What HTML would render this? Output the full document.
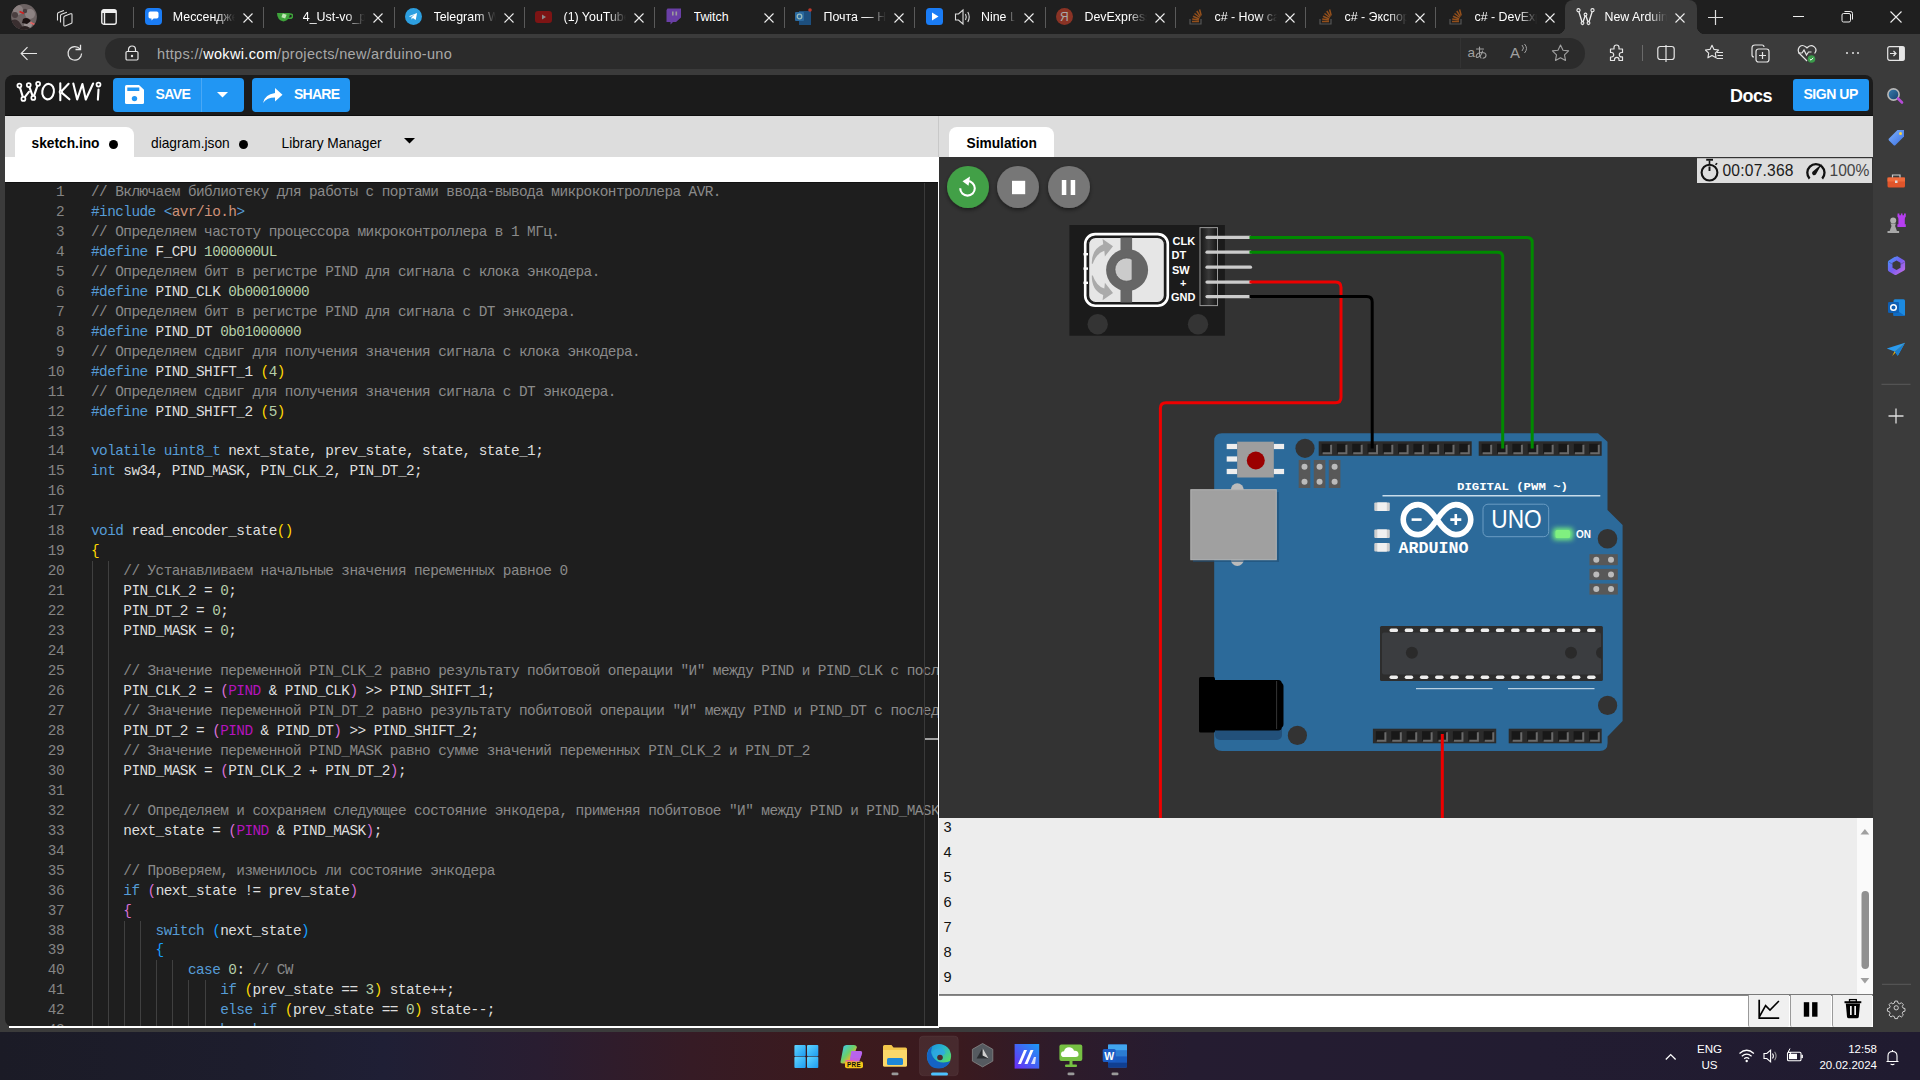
<!DOCTYPE html>
<html><head><meta charset="utf-8">
<style>
*{margin:0;padding:0;box-sizing:border-box}
html,body{width:1920px;height:1080px;overflow:hidden;background:#3b3b3b;font-family:"Liberation Sans",sans-serif}
body{position:relative}
.a{position:absolute}
#titlebar{left:0;top:0;width:1920px;height:34px;background:#1f1f1f}
#toolbar{left:0;top:34px;width:1920px;height:41px;background:#3b3b3b}
#page{left:5px;top:75px;width:1868px;height:957px;background:#333;border-top-left-radius:8px;overflow:hidden}
#hdr{left:5px;top:75px;width:1868px;height:41px;background:#1b1b1b;border-radius:8px 8px 0 0}
#etabs{left:5px;top:116px;width:933px;height:41px;background:#dddddd}
#wband{left:5px;top:157px;width:933px;height:25px;background:#fff}
#code{left:5px;top:182px;width:933px;height:845px;background:#1e1e1e;overflow:hidden;border-bottom-left-radius:8px}
#codeclip{left:0;top:0;width:938px;height:1027px;overflow:hidden}
.ln{position:absolute;left:0;height:20px;width:938px;font-family:"Liberation Mono",monospace;font-size:14.4px;letter-spacing:-0.56px;line-height:20px;white-space:pre;color:#dedede}
.ln .num{position:absolute;right:874px;color:#858585;text-align:right}
.ln .src{position:absolute;left:91px}
.ln i{font-style:normal}
i.c{color:#8a8a8a}
i.k{color:#569cd6}
i.s{color:#ce9178}
i.n{color:#b5cea8}
i.y{color:#ffd700}
i.p{color:#da70d6}
i.b{color:#179fff}
i.m{color:#b414bc}
#simtabs{left:939px;top:116px;width:934px;height:41px;background:#dddddd}
#simcanvas{left:939px;top:157px;width:934px;height:661px;background:#333}
#serial{left:939px;top:818px;width:934px;height:177px;background:#ededed}
#serin{left:939px;top:995px;width:934px;height:32px;background:#fff;border-top:1px solid #888}
#sidebar{left:1873px;top:75px;width:47px;height:957px;background:#3b3b3b}
#bottomstrip{left:0;top:1027px;width:1920px;height:5px;background:#3b3b3b}
#taskbar{left:0;top:1032px;width:1920px;height:48px;background:linear-gradient(90deg,#1b1b26 0%,#1d1d2d 13%,#1f1f35 20%,#291d31 28%,#361b25 36%,#3c1a1d 44%,#3a1a1f 50%,#2e1b2a 55%,#251c31 62%,#221c31 80%,#201b30 100%)}
</style></head><body>
<div class="a" id="titlebar"></div>
<div class="a" id="toolbar"></div>
<div class="a" id="sidebar"></div>
<div class="a" id="bottomstrip"></div>
<div class="a" id="hdr"></div>
<div class="a" id="etabs"></div>
<div class="a" id="wband"></div>
<div class="a" id="code"></div>
<div class="a" id="simtabs"></div>
<div class="a" id="simcanvas"></div>
<div class="a" id="serial"></div>
<div class="a" id="serin"></div>
<div class="a" id="taskbar"></div>
<div class="a" id="codeclip">
<div style="position:absolute;left:91.50px;top:561.24px;width:1px;height:465.76px;background:#404040"></div>
<div style="position:absolute;left:107.70px;top:561.24px;width:1px;height:465.76px;background:#404040"></div>
<div style="position:absolute;left:123.80px;top:920.52px;width:1px;height:106.48px;background:#404040"></div>
<div style="position:absolute;left:139.90px;top:920.52px;width:1px;height:106.48px;background:#404040"></div>
<div style="position:absolute;left:156.10px;top:960.44px;width:1px;height:66.56px;background:#404040"></div>
<div style="position:absolute;left:172.20px;top:960.44px;width:1px;height:66.56px;background:#404040"></div>
<div style="position:absolute;left:188.40px;top:980.40px;width:1px;height:46.60px;background:#404040"></div>
<div style="position:absolute;left:204.50px;top:980.40px;width:1px;height:46.60px;background:#404040"></div>
<div class="ln" style="top:182.00px"><span class="num">1</span><span class="src"><i class="c">// Включаем библиотеку для работы с портами ввода-вывода микроконтроллера AVR.</i></span></div>
<div class="ln" style="top:201.96px"><span class="num">2</span><span class="src"><i class="k">#include</i> <i class="k">&lt;</i><i class="s">avr/io.h</i><i class="k">&gt;</i></span></div>
<div class="ln" style="top:221.92px"><span class="num">3</span><span class="src"><i class="c">// Определяем частоту процессора микроконтроллера в 1 МГц.</i></span></div>
<div class="ln" style="top:241.88px"><span class="num">4</span><span class="src"><i class="k">#define</i> F_CPU <i class="n">1000000UL</i></span></div>
<div class="ln" style="top:261.84px"><span class="num">5</span><span class="src"><i class="c">// Определяем бит в регистре PIND для сигнала с клока энкодера.</i></span></div>
<div class="ln" style="top:281.80px"><span class="num">6</span><span class="src"><i class="k">#define</i> PIND_CLK <i class="n">0b00010000</i></span></div>
<div class="ln" style="top:301.76px"><span class="num">7</span><span class="src"><i class="c">// Определяем бит в регистре PIND для сигнала с DT энкодера.</i></span></div>
<div class="ln" style="top:321.72px"><span class="num">8</span><span class="src"><i class="k">#define</i> PIND_DT <i class="n">0b01000000</i></span></div>
<div class="ln" style="top:341.68px"><span class="num">9</span><span class="src"><i class="c">// Определяем сдвиг для получения значения сигнала с клока энкодера.</i></span></div>
<div class="ln" style="top:361.64px"><span class="num">10</span><span class="src"><i class="k">#define</i> PIND_SHIFT_1 <i class="y">(</i><i class="n">4</i><i class="y">)</i></span></div>
<div class="ln" style="top:381.60px"><span class="num">11</span><span class="src"><i class="c">// Определяем сдвиг для получения значения сигнала с DT энкодера.</i></span></div>
<div class="ln" style="top:401.56px"><span class="num">12</span><span class="src"><i class="k">#define</i> PIND_SHIFT_2 <i class="y">(</i><i class="n">5</i><i class="y">)</i></span></div>
<div class="ln" style="top:421.52px"><span class="num">13</span><span class="src"></span></div>
<div class="ln" style="top:441.48px"><span class="num">14</span><span class="src"><i class="k">volatile</i> <i class="k">uint8_t</i> next_state, prev_state, state, state_1;</span></div>
<div class="ln" style="top:461.44px"><span class="num">15</span><span class="src"><i class="k">int</i> sw34, PIND_MASK, PIN_CLK_2, PIN_DT_2;</span></div>
<div class="ln" style="top:481.40px"><span class="num">16</span><span class="src"></span></div>
<div class="ln" style="top:501.36px"><span class="num">17</span><span class="src"></span></div>
<div class="ln" style="top:521.32px"><span class="num">18</span><span class="src"><i class="k">void</i> read_encoder_state<i class="y">()</i></span></div>
<div class="ln" style="top:541.28px"><span class="num">19</span><span class="src"><i class="y">{</i></span></div>
<div class="ln" style="top:561.24px"><span class="num">20</span><span class="src">    <i class="c">// Устанавливаем начальные значения переменных равное 0</i></span></div>
<div class="ln" style="top:581.20px"><span class="num">21</span><span class="src">    PIN_CLK_2 = <i class="n">0</i>;</span></div>
<div class="ln" style="top:601.16px"><span class="num">22</span><span class="src">    PIN_DT_2 = <i class="n">0</i>;</span></div>
<div class="ln" style="top:621.12px"><span class="num">23</span><span class="src">    PIND_MASK = <i class="n">0</i>;</span></div>
<div class="ln" style="top:641.08px"><span class="num">24</span><span class="src"></span></div>
<div class="ln" style="top:661.04px"><span class="num">25</span><span class="src">    <i class="c">// Значение переменной PIN_CLK_2 равно результату побитовой операции "И" между PIND и PIND_CLK с последующим сдвигом</i></span></div>
<div class="ln" style="top:681.00px"><span class="num">26</span><span class="src">    PIN_CLK_2 = <i class="p">(</i><i class="m">PIND</i> &amp; PIND_CLK<i class="p">)</i> &gt;&gt; PIND_SHIFT_1;</span></div>
<div class="ln" style="top:700.96px"><span class="num">27</span><span class="src">    <i class="c">// Значение переменной PIN_DT_2 равно результату побитовой операции "И" между PIND и PIND_DT с последующим сдвигом</i></span></div>
<div class="ln" style="top:720.92px"><span class="num">28</span><span class="src">    PIN_DT_2 = <i class="p">(</i><i class="m">PIND</i> &amp; PIND_DT<i class="p">)</i> &gt;&gt; PIND_SHIFT_2;</span></div>
<div class="ln" style="top:740.88px"><span class="num">29</span><span class="src">    <i class="c">// Значение переменной PIND_MASK равно сумме значений переменных PIN_CLK_2 и PIN_DT_2</i></span></div>
<div class="ln" style="top:760.84px"><span class="num">30</span><span class="src">    PIND_MASK = <i class="p">(</i>PIN_CLK_2 + PIN_DT_2<i class="p">)</i>;</span></div>
<div class="ln" style="top:780.80px"><span class="num">31</span><span class="src"></span></div>
<div class="ln" style="top:800.76px"><span class="num">32</span><span class="src">    <i class="c">// Определяем и сохраняем следующее состояние энкодера, применяя побитовое "И" между PIND и PIND_MASK</i></span></div>
<div class="ln" style="top:820.72px"><span class="num">33</span><span class="src">    next_state = <i class="p">(</i><i class="m">PIND</i> &amp; PIND_MASK<i class="p">)</i>;</span></div>
<div class="ln" style="top:840.68px"><span class="num">34</span><span class="src"></span></div>
<div class="ln" style="top:860.64px"><span class="num">35</span><span class="src">    <i class="c">// Проверяем, изменилось ли состояние энкодера</i></span></div>
<div class="ln" style="top:880.60px"><span class="num">36</span><span class="src">    <i class="k">if</i> <i class="p">(</i>next_state != prev_state<i class="p">)</i></span></div>
<div class="ln" style="top:900.56px"><span class="num">37</span><span class="src">    <i class="p">{</i></span></div>
<div class="ln" style="top:920.52px"><span class="num">38</span><span class="src">        <i class="k">switch</i> <i class="b">(</i>next_state<i class="b">)</i></span></div>
<div class="ln" style="top:940.48px"><span class="num">39</span><span class="src">        <i class="b">{</i></span></div>
<div class="ln" style="top:960.44px"><span class="num">40</span><span class="src">            <i class="k">case</i> <i class="n">0</i>: <i class="c">// CW</i></span></div>
<div class="ln" style="top:980.40px"><span class="num">41</span><span class="src">                <i class="k">if</i> <i class="y">(</i>prev_state == <i class="n">3</i><i class="y">)</i> state++;</span></div>
<div class="ln" style="top:1000.36px"><span class="num">42</span><span class="src">                <i class="k">else if</i> <i class="y">(</i>prev_state == <i class="n">0</i><i class="y">)</i> state--;</span></div>
<div class="ln" style="top:1020.32px"><span class="num">43</span><span class="src">                <i class="k">break</i>;</span></div>
</div>
<svg class="a" style="left:10px;top:3px" width="28" height="28" viewBox="10 3 28 28"><defs><clipPath id="av"><circle cx="24" cy="16.8" r="12.9"/></clipPath></defs><g clip-path="url(#av)"><rect x="10" y="3" width="28" height="28" fill="#6e6464"/><circle cx="18" cy="10" r="5" fill="#8b8080"/><circle cx="30" cy="14" r="5" fill="#8d8383"/><circle cx="28" cy="24" r="4" fill="#9a9090"/><path d="M12 20q5-2 8 3t6 8H10z" fill="#3a2f30"/><path d="M23 19q3-2 6 0l2 2-4 3-5-1z" fill="#1c1212"/><circle cx="15" cy="15" r="3" fill="#4a3f40"/><circle cx="25" cy="11" r="2.2" fill="#4a3f40"/><path d="M20 28q5-4 10 0v4H20z" fill="#2a2020"/><path d="M19.5 11.5l4.5 2" stroke="#d02020" stroke-width="1.8"/><path d="M30.5 22.5l5 2.5" stroke="#e06060" stroke-width="1.6"/></g></svg>
<svg class="a" style="left:55px;top:7px" width="21" height="20" viewBox="0 0 21 20"><g fill="none" stroke="#e0e0e0" stroke-width="1.1" stroke-linejoin="round"><path d="M2.5 13.5V7q0-1.2 1.1-1.6l5.3-2"/><path d="M5.5 15.5V8.8q0-1.2 1.1-1.6l5.3-2"/><path d="M8.8 17.5V10.5q0-1.2 1.1-1.6l5.6-2.1q1.5-.5 1.5 1v7.4q0 1-1 1.4l-5.8 2.3q-1.4.5-1.4-1z"/></g></svg>
<svg class="a" style="left:101px;top:9px" width="16" height="16" viewBox="0 0 16 16"><rect x="0.8" y="0.8" width="14.4" height="14.4" rx="2" fill="none" stroke="#eee" stroke-width="1.4"/><rect x="1" y="1" width="14" height="3" fill="#eee"/><path d="M3.5 4v11" stroke="#eee" stroke-width="1.4"/></svg>
<div class="a" style="left:133.2px;top:7px;width:1px;height:21px;background:#5a5a5a"></div>
<div class="a" style="left:144.6px;top:8px;height:17px"><svg width="17" height="17" viewBox="0 0 17 17"><rect x="0" y="0" width="17" height="17" rx="4" fill="#1a7cf5"/><path d="M3.5 5.2q0-1.7 1.7-1.7h6.6q1.7 0 1.7 1.7v3.6q0 1.7-1.7 1.7H8.6l-2.1 2v-2H5.2q-1.7 0-1.7-1.7z" fill="#fff"/></svg></div>
<div class="a" style="left:172.8px;top:8.4px;width:62px;height:18px;overflow:hidden;white-space:nowrap;color:#fff;font-size:12.4px;line-height:18px;-webkit-mask-image:linear-gradient(90deg,#000 70%,transparent 100%)">Мессенджер</div>
<svg class="a" style="left:243.2px;top:13px" width="10" height="10" viewBox="0 0 10 10"><path d="M0.5 0.5l9 9M9.5 0.5l-9 9" stroke="#eee" stroke-width="1.1"/></svg>
<div class="a" style="left:263.2px;top:7px;width:1px;height:21px;background:#5a5a5a"></div>
<div class="a" style="left:274.6px;top:8px;height:17px"><svg width="18" height="17" viewBox="0 0 18 17"><path d="M2 5h13q0 7-6.5 8.5Q2 12 2 5z" fill="#3ea33b"/><path d="M15 6q3 0 2.5 2.5T13 10" stroke="#3ea33b" stroke-width="1.6" fill="none"/><rect x="7" y="6" width="4" height="4" transform="rotate(20 9 8)" fill="#bfe6b5"/></svg></div>
<div class="a" style="left:302.8px;top:8.4px;width:62px;height:18px;overflow:hidden;white-space:nowrap;color:#fff;font-size:12.4px;line-height:18px;-webkit-mask-image:linear-gradient(90deg,#000 70%,transparent 100%)">4_Ust-vo_pr</div>
<svg class="a" style="left:373.2px;top:13px" width="10" height="10" viewBox="0 0 10 10"><path d="M0.5 0.5l9 9M9.5 0.5l-9 9" stroke="#eee" stroke-width="1.1"/></svg>
<div class="a" style="left:394.0px;top:7px;width:1px;height:21px;background:#5a5a5a"></div>
<div class="a" style="left:405.3px;top:8px;height:17px"><svg width="17" height="17" viewBox="0 0 17 17"><circle cx="8.5" cy="8.5" r="8.5" fill="#2d9fe0"/><path d="M3.8 8.3l8.3-3.4-1.4 7.2-2.8-2-1.4 1.4v-2.3l3.4-3-4.2 2.6z" fill="#fff"/></svg></div>
<div class="a" style="left:433.5px;top:8.4px;width:62px;height:18px;overflow:hidden;white-space:nowrap;color:#fff;font-size:12.4px;line-height:18px;-webkit-mask-image:linear-gradient(90deg,#000 70%,transparent 100%)">Telegram Web</div>
<svg class="a" style="left:504.0px;top:13px" width="10" height="10" viewBox="0 0 10 10"><path d="M0.5 0.5l9 9M9.5 0.5l-9 9" stroke="#eee" stroke-width="1.1"/></svg>
<div class="a" style="left:524.0px;top:7px;width:1px;height:21px;background:#5a5a5a"></div>
<div class="a" style="left:535.3px;top:8px;height:17px"><svg width="17" height="17" viewBox="0 0 17 17"><rect x="0" y="3" width="17" height="12" rx="3" fill="#7d1414"/><path d="M7 6.5v5l4-2.5z" fill="#8a8a8a"/></svg></div>
<div class="a" style="left:563.5px;top:8.4px;width:62px;height:18px;overflow:hidden;white-space:nowrap;color:#fff;font-size:12.4px;line-height:18px;-webkit-mask-image:linear-gradient(90deg,#000 70%,transparent 100%)">(1) YouTube</div>
<svg class="a" style="left:634.0px;top:13px" width="10" height="10" viewBox="0 0 10 10"><path d="M0.5 0.5l9 9M9.5 0.5l-9 9" stroke="#eee" stroke-width="1.1"/></svg>
<div class="a" style="left:654.0px;top:7px;width:1px;height:21px;background:#5a5a5a"></div>
<div class="a" style="left:665.3px;top:8px;height:17px"><svg width="17" height="17" viewBox="0 0 17 17"><path d="M1.5 2l1-1.5H16v9l-5 4.5H8l-2.5 2.5v-2.5H1.5z" fill="#6a3fa6"/><rect x="7" y="3.5" width="1.6" height="4" fill="#9b9b9b"/><rect x="10.5" y="3.5" width="1.6" height="4" fill="#9b9b9b"/></svg></div>
<div class="a" style="left:693.5px;top:8.4px;width:62px;height:18px;overflow:hidden;white-space:nowrap;color:#fff;font-size:12.4px;line-height:18px">Twitch</div>
<svg class="a" style="left:764.0px;top:13px" width="10" height="10" viewBox="0 0 10 10"><path d="M0.5 0.5l9 9M9.5 0.5l-9 9" stroke="#eee" stroke-width="1.1"/></svg>
<div class="a" style="left:784.0px;top:7px;width:1px;height:21px;background:#5a5a5a"></div>
<div class="a" style="left:795.3px;top:8px;height:17px"><svg width="18" height="18" viewBox="0 0 18 18"><rect x="4" y="3" width="12" height="14" fill="#1d4f7e"/><rect x="0" y="4" width="9" height="9" rx="1" fill="#2b6aa0"/><circle cx="4.5" cy="8.5" r="2.3" stroke="#9bb" stroke-width="1.3" fill="none"/><circle cx="15" cy="2" r="1.8" fill="#c0392b"/></svg></div>
<div class="a" style="left:823.5px;top:8.4px;width:62px;height:18px;overflow:hidden;white-space:nowrap;color:#fff;font-size:12.4px;line-height:18px;-webkit-mask-image:linear-gradient(90deg,#000 70%,transparent 100%)">Почта — Hotmail</div>
<svg class="a" style="left:894.0px;top:13px" width="10" height="10" viewBox="0 0 10 10"><path d="M0.5 0.5l9 9M9.5 0.5l-9 9" stroke="#eee" stroke-width="1.1"/></svg>
<div class="a" style="left:914.0px;top:7px;width:1px;height:21px;background:#5a5a5a"></div>
<div class="a" style="left:926.0px;top:8px"><svg width="17" height="17" viewBox="0 0 17 17"><rect x="0" y="0" width="17" height="17" rx="3.5" fill="#1a7cf5"/><path d="M6 4.5v8l6.5-4z" fill="#fff"/></svg></div>
<svg class="a" style="left:953.5px;top:8px" width="18" height="18" viewBox="0 0 18 18"><path d="M1.5 6h3l4.5-4v14l-4.5-4h-3z" fill="none" stroke="#ddd" stroke-width="1.1"/><path d="M11.5 6q1.5 3 0 6M13.8 4q2.8 5 0 10" fill="none" stroke="#ddd" stroke-width="1.1"/></svg>
<div class="a" style="left:981.0px;top:8.4px;width:34px;height:18px;overflow:hidden;white-space:nowrap;color:#fff;font-size:12.4px;line-height:18px;-webkit-mask-image:linear-gradient(90deg,#000 70%,transparent 100%)">Nine Lives</div>
<svg class="a" style="left:1024.0px;top:13px" width="10" height="10" viewBox="0 0 10 10"><path d="M0.5 0.5l9 9M9.5 0.5l-9 9" stroke="#eee" stroke-width="1.1"/></svg>
<div class="a" style="left:1045.0px;top:7px;width:1px;height:21px;background:#5a5a5a"></div>
<div class="a" style="left:1056.3px;top:8px;height:17px"><svg width="17" height="17" viewBox="0 0 17 17"><circle cx="8.5" cy="8.5" r="8.5" fill="#8a3325"/><text x="8.3" y="13" font-family="Liberation Sans" font-size="12" fill="#aaa" text-anchor="middle">Я</text></svg></div>
<div class="a" style="left:1084.5px;top:8.4px;width:62px;height:18px;overflow:hidden;white-space:nowrap;color:#fff;font-size:12.4px;line-height:18px;-webkit-mask-image:linear-gradient(90deg,#000 70%,transparent 100%)">DevExpress</div>
<svg class="a" style="left:1155.0px;top:13px" width="10" height="10" viewBox="0 0 10 10"><path d="M0.5 0.5l9 9M9.5 0.5l-9 9" stroke="#eee" stroke-width="1.1"/></svg>
<div class="a" style="left:1175.0px;top:7px;width:1px;height:21px;background:#5a5a5a"></div>
<div class="a" style="left:1189.3px;top:8px;height:17px"><svg width="14" height="17" viewBox="0 0 14 17"><path d="M1 11v5h11v-5" stroke="#555" stroke-width="1.2" fill="none"/><g stroke="#94501c" stroke-width="1.5"><path d="M3 13.5h7"/><path d="M3.2 11l6.8 1"/><path d="M4 8.3l6.2 2.7"/><path d="M5.5 5.5l5.3 4"/><path d="M7.8 3l3.6 5.6"/><path d="M10.6 1.5l1.6 6"/></g></svg></div>
<div class="a" style="left:1214.5px;top:8.4px;width:62px;height:18px;overflow:hidden;white-space:nowrap;color:#fff;font-size:12.4px;line-height:18px;-webkit-mask-image:linear-gradient(90deg,#000 70%,transparent 100%)">c# - How can</div>
<svg class="a" style="left:1285.0px;top:13px" width="10" height="10" viewBox="0 0 10 10"><path d="M0.5 0.5l9 9M9.5 0.5l-9 9" stroke="#eee" stroke-width="1.1"/></svg>
<div class="a" style="left:1305.0px;top:7px;width:1px;height:21px;background:#5a5a5a"></div>
<div class="a" style="left:1319.3px;top:8px;height:17px"><svg width="14" height="17" viewBox="0 0 14 17"><path d="M1 11v5h11v-5" stroke="#555" stroke-width="1.2" fill="none"/><g stroke="#94501c" stroke-width="1.5"><path d="M3 13.5h7"/><path d="M3.2 11l6.8 1"/><path d="M4 8.3l6.2 2.7"/><path d="M5.5 5.5l5.3 4"/><path d="M7.8 3l3.6 5.6"/><path d="M10.6 1.5l1.6 6"/></g></svg></div>
<div class="a" style="left:1344.5px;top:8.4px;width:62px;height:18px;overflow:hidden;white-space:nowrap;color:#fff;font-size:12.4px;line-height:18px;-webkit-mask-image:linear-gradient(90deg,#000 70%,transparent 100%)">c# - Экспорт</div>
<svg class="a" style="left:1415.0px;top:13px" width="10" height="10" viewBox="0 0 10 10"><path d="M0.5 0.5l9 9M9.5 0.5l-9 9" stroke="#eee" stroke-width="1.1"/></svg>
<div class="a" style="left:1435.0px;top:7px;width:1px;height:21px;background:#5a5a5a"></div>
<div class="a" style="left:1449.3px;top:8px;height:17px"><svg width="14" height="17" viewBox="0 0 14 17"><path d="M1 11v5h11v-5" stroke="#555" stroke-width="1.2" fill="none"/><g stroke="#94501c" stroke-width="1.5"><path d="M3 13.5h7"/><path d="M3.2 11l6.8 1"/><path d="M4 8.3l6.2 2.7"/><path d="M5.5 5.5l5.3 4"/><path d="M7.8 3l3.6 5.6"/><path d="M10.6 1.5l1.6 6"/></g></svg></div>
<div class="a" style="left:1474.5px;top:8.4px;width:62px;height:18px;overflow:hidden;white-space:nowrap;color:#fff;font-size:12.4px;line-height:18px;-webkit-mask-image:linear-gradient(90deg,#000 70%,transparent 100%)">c# - DevExpress</div>
<svg class="a" style="left:1545.0px;top:13px" width="10" height="10" viewBox="0 0 10 10"><path d="M0.5 0.5l9 9M9.5 0.5l-9 9" stroke="#eee" stroke-width="1.1"/></svg>
<div class="a" style="left:1565px;top:0;width:132px;height:34px;background:#3b3b3b;border-radius:8px 8px 0 0"></div>
<div class="a" style="left:1557px;top:26px;width:8px;height:8px;background:radial-gradient(circle at 0 0,#1f1f1f 8px,#3b3b3b 8.5px)"></div>
<div class="a" style="left:1697px;top:26px;width:8px;height:8px;background:radial-gradient(circle at 8px 0,#1f1f1f 8px,#3b3b3b 8.5px)"></div>
<svg class="a" style="left:1576px;top:7px" width="19" height="19" viewBox="0 0 19 19"><g fill="none" stroke="#eee" stroke-width="1.3"><path d="M2.5 3.5l4 13 3-9 3 9 4-13"/></g><g fill="#3b3b3b" stroke="#eee" stroke-width="1.1"><circle cx="2.5" cy="3.2" r="1.6"/><circle cx="16.5" cy="3.2" r="1.6"/><circle cx="9.5" cy="7.5" r="1.4"/><circle cx="6.5" cy="16" r="1.4"/><circle cx="12.5" cy="16" r="1.4"/></g></svg>
<div class="a" style="left:1604.5px;top:8.4px;width:62px;height:18px;overflow:hidden;white-space:nowrap;color:#fff;font-size:12.4px;line-height:18px;-webkit-mask-image:linear-gradient(90deg,#000 70%,transparent 100%)">New Arduino Project</div>
<svg class="a" style="left:1675px;top:13px" width="10" height="10" viewBox="0 0 10 10"><path d="M0.5 0.5l9 9M9.5 0.5l-9 9" stroke="#eee" stroke-width="1.1"/></svg>
<svg class="a" style="left:1708px;top:10px" width="15" height="15" viewBox="0 0 15 15"><path d="M7.5 0v15M0 7.5h15" stroke="#ddd" stroke-width="1.2"/></svg>
<div class="a" style="left:1793px;top:16px;width:11px;height:1px;background:#eee"></div>
<svg class="a" style="left:1841px;top:10px" width="13" height="13" viewBox="0 0 13 13"><rect x="1" y="3.5" width="8.5" height="8.5" rx="1.5" fill="none" stroke="#eee" stroke-width="1"/><path d="M3.5 1.5h6q2 0 2 2v6" fill="none" stroke="#eee" stroke-width="1"/></svg>
<svg class="a" style="left:1890px;top:11px" width="12" height="12" viewBox="0 0 12 12"><path d="M0.5 0.5l11 11M11.5 0.5l-11 11" stroke="#eee" stroke-width="1.1"/></svg>
<svg class="a" style="left:20px;top:46px" width="18" height="15" viewBox="0 0 18 15"><path d="M17 7.5H1.5M7.5 1.2L1.2 7.5l6.3 6.3" fill="none" stroke="#e6e6e6" stroke-width="1.2"/></svg>
<svg class="a" style="left:66px;top:44px" width="18" height="18" viewBox="0 0 18 18"><path d="M14.2 5.2A6.8 6.8 0 1 0 15.6 9.5" fill="none" stroke="#e6e6e6" stroke-width="1.2"/><path d="M9.5 5.5h5V0.8" fill="none" stroke="#e6e6e6" stroke-width="1.3"/></svg>
<div class="a" style="left:105px;top:37.5px;width:1480px;height:31px;background:#2b2b2b;border-radius:15.5px"></div>
<div class="a" style="left:1459.5px;top:38px;width:1px;height:30px;background:#333"></div>
<svg class="a" style="left:125px;top:45px" width="14" height="16" viewBox="0 0 14 16"><path d="M3.5 6.5V4.5a3.5 3.5 0 0 1 7 0v2" fill="none" stroke="#e6e6e6" stroke-width="1.2"/><rect x="1" y="6.5" width="12" height="8.5" rx="1.2" fill="none" stroke="#e6e6e6" stroke-width="1.2"/><circle cx="7" cy="11" r="1.2" fill="#e6e6e6"/></svg>
<div class="a" style="left:157px;top:44px;height:20px;line-height:20px;font-size:14.5px;letter-spacing:0.33px;white-space:nowrap;color:#a8a8a8">https://<span style="color:#fff">wokwi.com</span>/projects/new/arduino-uno</div>
<div class="a" style="left:1467.5px;top:43px;height:20px;line-height:20px;font-size:13.5px;color:#a0a0a0;white-space:nowrap">a</div>
<svg class="a" style="left:1475px;top:46px" width="12" height="13" viewBox="0 0 12 13"><g fill="none" stroke="#a0a0a0" stroke-width="1.1" stroke-linecap="round"><path d="M1.5 3h7"/><path d="M4.5 1v6.5q0 2.5 1.5 4.5"/><path d="M7.5 5q-1 5-4.5 6.3Q1 12 1.2 10q.5-3 5-3.5q4.5-.3 4.8 2.5q.2 2.5-3 3.2"/></g></svg>
<div class="a" style="left:1510px;top:43px;height:20px;line-height:20px;font-size:15px;color:#a0a0a0">A</div>
<svg class="a" style="left:1521px;top:44px" width="8" height="10" viewBox="0 0 8 10"><path d="M1 1q3 3 0 6M3.5 0q4 4.5 0 9" fill="none" stroke="#a0a0a0" stroke-width="1"/></svg>
<svg class="a" style="left:1551px;top:44px" width="19" height="18" viewBox="0 0 19 18"><path d="M9.5 1l2.5 5.2 5.6.7-4.1 3.9 1 5.6-5-2.7-5 2.7 1-5.6-4.1-3.9 5.6-.7z" fill="none" stroke="#a0a0a0" stroke-width="1.1" stroke-linejoin="round"/></svg>
<svg class="a" style="left:1607px;top:44px" width="19" height="19" viewBox="0 0 19 19"><path d="M7 3.5q0-2.5 2.5-2.5T12 3.5V5h3.5v3.5h-1q-2.2 0-2.2 2.2t2.2 2.2h1v3.6H12v-1q0-2.2-2.2-2.2T7.5 15.5v1H3.5V13h1q2.2 0 2.2-2.2T4.5 8.5h-1V5H7z" fill="none" stroke="#e6e6e6" stroke-width="1.2" stroke-linejoin="round"/></svg>
<div class="a" style="left:1641.5px;top:45px;width:1px;height:16px;background:#6a6a6a"></div>
<svg class="a" style="left:1657px;top:45px" width="18" height="17" viewBox="0 0 18 17"><rect x="0.8" y="1.5" width="16.4" height="13" rx="2.5" fill="none" stroke="#e6e6e6" stroke-width="1.2"/><path d="M9 0v17" stroke="#e6e6e6" stroke-width="1.2"/></svg>
<svg class="a" style="left:1705px;top:44px" width="19" height="18" viewBox="0 0 19 18"><path d="M7 1.2l2 4.2 4.6.6-3.3 3.2.8 4.6L7 11.6l-4.1 2.2.8-4.6L.4 6l4.6-.6z" fill="none" stroke="#e6e6e6" stroke-width="1.1" stroke-linejoin="round"/><path d="M12 8.5h6M12.5 11.5h5.5M11.5 14.5h6.5" stroke="#e6e6e6" stroke-width="1.1"/></svg>
<svg class="a" style="left:1751px;top:44px" width="19" height="19" viewBox="0 0 19 19"><path d="M3 13q-2 0-2-2V4q0-3 3-3h7q2 0 2 2" fill="none" stroke="#e6e6e6" stroke-width="1.2"/><rect x="5" y="5" width="13" height="13" rx="2.5" fill="none" stroke="#e6e6e6" stroke-width="1.2"/><path d="M11.5 8v7M8 11.5h7" stroke="#e6e6e6" stroke-width="1.2"/></svg>
<svg class="a" style="left:1797px;top:44px" width="20" height="20" viewBox="0 0 20 20"><path d="M10 17L2.5 9.5Q0 6.5 2.3 3.2T9 3l1 1 1-1q3-2.8 6.3-.1t.3 6.6" fill="none" stroke="#e6e6e6" stroke-width="1.2"/><path d="M1 9h4l2-3 2.5 5 2-3h3" fill="none" stroke="#e6e6e6" stroke-width="1.2"/><circle cx="14.5" cy="15" r="3.8" fill="#3a9a4a"/><path d="M12.8 15l1.2 1.2 2.2-2.4" fill="none" stroke="#fff" stroke-width="1"/></svg>
<div class="a" style="left:1846.0px;top:52px;width:2.2px;height:2.2px;border-radius:50%;background:#e6e6e6"></div>
<div class="a" style="left:1851.5px;top:52px;width:2.2px;height:2.2px;border-radius:50%;background:#e6e6e6"></div>
<div class="a" style="left:1857.0px;top:52px;width:2.2px;height:2.2px;border-radius:50%;background:#e6e6e6"></div>
<svg class="a" style="left:1887px;top:46px" width="18" height="15" viewBox="0 0 18 15"><rect x="0.7" y="0.7" width="16.6" height="13.6" rx="2" fill="none" stroke="#e6e6e6" stroke-width="1.2"/><rect x="12" y="0.7" width="5.3" height="13.6" fill="#e6e6e6"/><path d="M3 7.5h6M6.5 5l2.5 2.5L6.5 10" fill="none" stroke="#e6e6e6" stroke-width="1.2"/></svg><div class="a" id="hdrline" style="left:5px;top:114.6px;width:1868px;height:1.4px;background:#0e0e0e"></div>
<!-- WOKWI header -->
<svg class="a" style="left:14px;top:79px" width="92" height="25" viewBox="14 79 92 25">
<g fill="none" stroke="#fff" stroke-width="2.1" stroke-linecap="round" stroke-linejoin="round">
<path d="M19.4 85.6L23.4 98.9L28.9 91.8M28.75 85.1L33.3 97.9L38.1 83.8"/>
<ellipse cx="48.1" cy="91.65" rx="5.8" ry="7.8" transform="rotate(8 48.1 91.65)"/>
<path d="M60.3 83.2V100.3M68.6 83.8L60.8 91.9L69.4 99.3"/>
<path d="M73.3 83.5L77.2 99.5L82.4 84L85.8 99.5L93.1 83.5"/>
<path d="M98.5 89.6L97.9 99.6"/>
</g>
<g fill="#1b1b1b" stroke="#fff" stroke-width="1.7">
<circle cx="19.4" cy="85.6" r="2"/><circle cx="23.4" cy="98.9" r="2"/><circle cx="28.75" cy="85.1" r="2"/><circle cx="33.3" cy="97.9" r="2"/><circle cx="38.1" cy="83.8" r="2"/><circle cx="60.8" cy="91.9" r="1.3"/><circle cx="98.5" cy="84.6" r="2"/>
</g>
</svg>
<div class="a" style="left:113px;top:78px;width:131px;height:34px;background:#2196f3;border-radius:4px"></div>
<div class="a" style="left:201px;top:78px;width:1px;height:34px;background:#4aa8f5"></div>
<svg class="a" style="left:125px;top:85px" width="19" height="19" viewBox="0 0 19 19"><path d="M0 1.5Q0 0 1.5 0H14l5 4.8V17.5Q19 19 17.5 19h-16Q0 19 0 17.5z" fill="#fff"/><rect x="2.3" y="2.5" width="12" height="3.5" fill="#2196f3"/><circle cx="9.5" cy="13.6" r="2.7" fill="#2196f3"/></svg>
<div class="a" style="left:155.5px;top:85px;height:18px;line-height:18px;font-size:14px;font-weight:bold;letter-spacing:-0.6px;color:#fff">SAVE</div>
<svg class="a" style="left:217px;top:92px" width="11" height="6" viewBox="0 0 11 6"><path d="M0 0h11L5.5 5.6z" fill="#fff"/></svg>
<div class="a" style="left:252px;top:78px;width:98px;height:34px;background:#2196f3;border-radius:4px"></div>
<svg class="a" style="left:263px;top:88px" width="20" height="15" viewBox="0 0 20 15"><path d="M12 0l7.5 6.8L12 13.5V9.6Q4 9.6 0 15q1.5-8.5 12-10z" fill="#fff"/></svg>
<div class="a" style="left:294px;top:85px;height:18px;line-height:18px;font-size:14px;font-weight:bold;letter-spacing:-0.75px;color:#fff">SHARE</div>
<div class="a" style="left:1730px;top:85px;height:22px;line-height:22px;font-size:18px;font-weight:bold;letter-spacing:-0.5px;color:#fff">Docs</div>
<div class="a" style="left:1793px;top:79px;width:76px;height:32px;background:#2196f3;border-radius:3px"></div>
<div class="a" style="left:1803.5px;top:84.6px;height:18px;line-height:18px;font-size:14px;font-weight:bold;letter-spacing:-0.47px;color:#fff">SIGN UP</div>

<!-- editor tabs -->
<div class="a" style="left:15px;top:127px;width:119px;height:30px;background:#fff;border-radius:8px 8px 0 0"></div>
<div class="a" style="left:31.5px;top:135px;height:18px;line-height:18px;font-size:13.75px;font-weight:bold;color:#000">sketch.ino</div>
<div class="a" style="left:108.5px;top:139.5px;width:9px;height:9px;border-radius:50%;background:#000"></div>
<div class="a" style="left:151px;top:135px;height:18px;line-height:18px;font-size:13.75px;color:#000">diagram.json</div>
<div class="a" style="left:238.5px;top:139.5px;width:9px;height:9px;border-radius:50%;background:#000"></div>
<div class="a" style="left:281.5px;top:135px;height:18px;line-height:18px;font-size:13.75px;color:#000">Library Manager</div>
<svg class="a" style="left:404px;top:138px" width="11" height="6" viewBox="0 0 11 6"><path d="M0 0h11L5.5 5.5z" fill="#000"/></svg>
<!-- separator between editor & sim -->
<div class="a" style="left:938px;top:116px;width:1px;height:41px;background:#c8c8c8"></div>
<div class="a" style="left:937.8px;top:157px;width:1.5px;height:871px;background:#fff"></div>
<div class="a" style="left:9px;top:1026.3px;width:930px;height:1.5px;background:#fff"></div>
<div class="a" style="left:5px;top:182px;width:933px;height:1px;background:#111"></div>
<div class="a" style="left:924px;top:183px;width:1px;height:843px;background:#3a3a3a"></div>
<div class="a" style="left:925px;top:738px;width:13px;height:2px;background:#a0a0a0"></div>
<!-- sim tab -->
<div class="a" style="left:949px;top:127px;width:105px;height:30px;background:#fff;border-radius:8px 8px 0 0"></div>
<div class="a" style="left:966.5px;top:135px;height:18px;line-height:18px;font-size:13.75px;font-weight:bold;color:#000">Simulation</div>
<svg class="a" style="left:939px;top:157px" width="934" height="661" viewBox="939 157 934 661">
<defs><filter id="sh" x="-50%" y="-50%" width="200%" height="200%"><feDropShadow dx="0" dy="2" stdDeviation="2" flood-color="#000" flood-opacity="0.45"/></filter><filter id="glow" x="-100%" y="-100%" width="300%" height="300%"><feGaussianBlur stdDeviation="2.5"/></filter><linearGradient id="hdrg" x1="0" x2="1"><stop offset="0" stop-color="#151515"/><stop offset="0.5" stop-color="#3a3a3a"/><stop offset="1" stop-color="#151515"/></linearGradient></defs>
<circle cx="968" cy="187" r="21" fill="#43a047" filter="url(#sh)"/>
<circle cx="1018" cy="187" r="21" fill="#777" filter="url(#sh)"/>
<circle cx="1069" cy="187" r="21" fill="#777" filter="url(#sh)"/>
<path d="M967.5 181A7.3 7.3 0 1 1 960.2 188.3" fill="none" stroke="#fff" stroke-width="2.1"/>
<path d="M970 176.5L962.5 181.2L968.5 185.8z" fill="#fff"/>
<rect x="1012" y="180.8" width="13.2" height="13.4" fill="#fff"/>
<rect x="1061.8" y="180" width="4.5" height="15" fill="#fff"/><rect x="1070.7" y="180" width="4.5" height="15" fill="#fff"/>
<rect x="1697" y="158.2" width="175" height="24.8" fill="#dddddd"/>
<circle cx="1709.5" cy="172.6" r="7.9" fill="none" stroke="#111" stroke-width="2.1"/>
<rect x="1706.2" y="158.8" width="6.8" height="1.9" fill="#111"/>
<path d="M1709.5 160.5v3.5" stroke="#111" stroke-width="1.6"/>
<path d="M1709.5 166.5v4.5" stroke="#111" stroke-width="1.9"/>
<path d="M1715.5 164.8l1.6-1.6" stroke="#111" stroke-width="1.6"/>
<path d="M1809.6 178.6A8.6 8.6 0 1 1 1822.2 178.6" fill="none" stroke="#111" stroke-width="2.3"/>
<path d="M1813.4 171l8.6-7.2-5.6 9.8a2.2 2.2 0 1 1-3-2.6z" fill="#111"/>
</svg>
<div class="a" style="left:1722.5px;top:161px;height:20px;line-height:20px;font-size:15.6px;letter-spacing:0.2px;color:#1a1a1a;white-space:nowrap">00:07.368</div>
<div class="a" style="left:1829.5px;top:161px;height:20px;line-height:20px;font-size:15.6px;color:#444;white-space:nowrap">100%</div>
<svg class="a" style="left:939px;top:157px" width="934" height="661" viewBox="939 157 934 661">
<rect x="1069.4" y="225" width="155.5" height="110.7" fill="#1b1b1b"/>
<circle cx="1097.7" cy="324.3" r="10.2" fill="#343434"/><circle cx="1198" cy="324.3" r="10.2" fill="#343434"/>
<rect x="1085.2" y="234.1" width="82.6" height="71.6" rx="10" fill="#1b1b1b" stroke="#fff" stroke-width="2.6"/>
<rect x="1088.6" y="237.3" width="75.8" height="65.2" rx="7" fill="#e6e6e6" stroke="#1b1b1b" stroke-width="1.2"/>
<rect x="1083.5" y="253.0" width="4.5" height="2.4" fill="#fff"/>
<rect x="1083.5" y="267.40000000000003" width="4.5" height="2.4" fill="#fff"/>
<rect x="1083.5" y="281.6" width="4.5" height="2.4" fill="#fff"/>
<rect x="1120.5" y="237.5" width="11.6" height="65" fill="#666"/>
<circle cx="1127.1" cy="270" r="21" fill="#666"/>
<path d="M1132.1 259.4A11.6 11.6 0 1 0 1132.1 279.8z" fill="#cbcbcb" stroke="#555" stroke-width="0.7"/>
<path d="M1091.8 263.8Q1091.5 249 1103.2 244.2L1102.6 238.9L1113 246.3L1104.9 256.4L1104.3 250.8Q1096.5 253 1092.8 263.8Z" fill="#aaa"/>
<path d="M1091.8 275.4Q1091.5 290.2 1103.2 295L1102.6 300.3L1113 292.9L1104.9 282.8L1104.3 288.4Q1096.5 286.2 1092.8 275.4Z" fill="#aaa"/>
<text x="1172.5" y="244.6" font-family="Liberation Sans" font-weight="bold" font-size="11" fill="#fff">CLK</text>
<text x="1171.5" y="259.4" font-family="Liberation Sans" font-weight="bold" font-size="11" fill="#fff">DT</text>
<text x="1172" y="273.5" font-family="Liberation Sans" font-weight="bold" font-size="11" fill="#fff">SW</text>
<text x="1180" y="286.7" font-family="Liberation Sans" font-weight="bold" font-size="11" fill="#fff">+</text>
<text x="1171" y="301.4" font-family="Liberation Sans" font-weight="bold" font-size="11" fill="#fff">GND</text>
<rect x="1200" y="227.6" width="17.5" height="78" fill="url(#hdrg)" stroke="#999" stroke-width="1"/>
<path d="M1207 237.4H1250.5" stroke="#ccc" stroke-width="3.2" stroke-linecap="round"/>
<path d="M1207 252.2H1250.5" stroke="#ccc" stroke-width="3.2" stroke-linecap="round"/>
<path d="M1207 267.2H1250.5" stroke="#ccc" stroke-width="3.2" stroke-linecap="round"/>
<path d="M1207 282.1H1250.5" stroke="#ccc" stroke-width="3.2" stroke-linecap="round"/>
<path d="M1207 296.6H1250.5" stroke="#ccc" stroke-width="3.2" stroke-linecap="round"/>
<path d="M1222 433.3H1598L1607.5 441.7V510L1622.6 525V721L1607.6 736.6V743Q1607.6 751 1599.6 751H1222Q1214.2 751 1214.2 743V441.1Q1214.2 433.3 1222 433.3z" fill="#2c6a9a"/>
<rect x="1318.7" y="441.3" width="153.00" height="14.50" fill="#2b2b2b"/>
<rect x="1321.61" y="443.81" width="9.49" height="9.49" fill="#181818"/>
<path d="M1331.09 444.81V453.29H1322.61" fill="none" stroke="#6a6a6a" stroke-width="2"/>
<rect x="1336.91" y="443.81" width="9.49" height="9.49" fill="#181818"/>
<path d="M1346.39 444.81V453.29H1337.91" fill="none" stroke="#6a6a6a" stroke-width="2"/>
<rect x="1352.21" y="443.81" width="9.49" height="9.49" fill="#181818"/>
<path d="M1361.69 444.81V453.29H1353.21" fill="none" stroke="#6a6a6a" stroke-width="2"/>
<rect x="1367.51" y="443.81" width="9.49" height="9.49" fill="#181818"/>
<path d="M1376.99 444.81V453.29H1368.51" fill="none" stroke="#6a6a6a" stroke-width="2"/>
<rect x="1382.81" y="443.81" width="9.49" height="9.49" fill="#181818"/>
<path d="M1392.29 444.81V453.29H1383.81" fill="none" stroke="#6a6a6a" stroke-width="2"/>
<rect x="1398.11" y="443.81" width="9.49" height="9.49" fill="#181818"/>
<path d="M1407.59 444.81V453.29H1399.11" fill="none" stroke="#6a6a6a" stroke-width="2"/>
<rect x="1413.41" y="443.81" width="9.49" height="9.49" fill="#181818"/>
<path d="M1422.89 444.81V453.29H1414.41" fill="none" stroke="#6a6a6a" stroke-width="2"/>
<rect x="1428.71" y="443.81" width="9.49" height="9.49" fill="#181818"/>
<path d="M1438.19 444.81V453.29H1429.71" fill="none" stroke="#6a6a6a" stroke-width="2"/>
<rect x="1444.01" y="443.81" width="9.49" height="9.49" fill="#181818"/>
<path d="M1453.49 444.81V453.29H1445.01" fill="none" stroke="#6a6a6a" stroke-width="2"/>
<rect x="1459.31" y="443.81" width="9.49" height="9.49" fill="#181818"/>
<path d="M1468.79 444.81V453.29H1460.31" fill="none" stroke="#6a6a6a" stroke-width="2"/>
<rect x="1478.7" y="441.3" width="123.00" height="14.50" fill="#2b2b2b"/>
<rect x="1481.62" y="443.78" width="9.53" height="9.53" fill="#181818"/>
<path d="M1491.15 444.78V453.32H1482.62" fill="none" stroke="#6a6a6a" stroke-width="2"/>
<rect x="1497.00" y="443.78" width="9.53" height="9.53" fill="#181818"/>
<path d="M1506.53 444.78V453.32H1498.00" fill="none" stroke="#6a6a6a" stroke-width="2"/>
<rect x="1512.37" y="443.78" width="9.53" height="9.53" fill="#181818"/>
<path d="M1521.90 444.78V453.32H1513.37" fill="none" stroke="#6a6a6a" stroke-width="2"/>
<rect x="1527.75" y="443.78" width="9.53" height="9.53" fill="#181818"/>
<path d="M1537.28 444.78V453.32H1528.75" fill="none" stroke="#6a6a6a" stroke-width="2"/>
<rect x="1543.12" y="443.78" width="9.53" height="9.53" fill="#181818"/>
<path d="M1552.65 444.78V453.32H1544.12" fill="none" stroke="#6a6a6a" stroke-width="2"/>
<rect x="1558.50" y="443.78" width="9.53" height="9.53" fill="#181818"/>
<path d="M1568.03 444.78V453.32H1559.50" fill="none" stroke="#6a6a6a" stroke-width="2"/>
<rect x="1573.87" y="443.78" width="9.53" height="9.53" fill="#181818"/>
<path d="M1583.40 444.78V453.32H1574.87" fill="none" stroke="#6a6a6a" stroke-width="2"/>
<rect x="1589.25" y="443.78" width="9.53" height="9.53" fill="#181818"/>
<path d="M1598.78 444.78V453.32H1590.25" fill="none" stroke="#6a6a6a" stroke-width="2"/>
<rect x="1372.9" y="728.7" width="123.30" height="14.60" fill="#2b2b2b"/>
<rect x="1375.83" y="731.22" width="9.56" height="9.56" fill="#181818"/>
<path d="M1385.38 732.22V740.78H1376.83" fill="none" stroke="#6a6a6a" stroke-width="2"/>
<rect x="1391.24" y="731.22" width="9.56" height="9.56" fill="#181818"/>
<path d="M1400.80 732.22V740.78H1392.24" fill="none" stroke="#6a6a6a" stroke-width="2"/>
<rect x="1406.65" y="731.22" width="9.56" height="9.56" fill="#181818"/>
<path d="M1416.21 732.22V740.78H1407.65" fill="none" stroke="#6a6a6a" stroke-width="2"/>
<rect x="1422.07" y="731.22" width="9.56" height="9.56" fill="#181818"/>
<path d="M1431.62 732.22V740.78H1423.07" fill="none" stroke="#6a6a6a" stroke-width="2"/>
<rect x="1437.48" y="731.22" width="9.56" height="9.56" fill="#181818"/>
<path d="M1447.03 732.22V740.78H1438.48" fill="none" stroke="#6a6a6a" stroke-width="2"/>
<rect x="1452.89" y="731.22" width="9.56" height="9.56" fill="#181818"/>
<path d="M1462.45 732.22V740.78H1453.89" fill="none" stroke="#6a6a6a" stroke-width="2"/>
<rect x="1468.30" y="731.22" width="9.56" height="9.56" fill="#181818"/>
<path d="M1477.86 732.22V740.78H1469.30" fill="none" stroke="#6a6a6a" stroke-width="2"/>
<rect x="1483.72" y="731.22" width="9.56" height="9.56" fill="#181818"/>
<path d="M1493.27 732.22V740.78H1484.72" fill="none" stroke="#6a6a6a" stroke-width="2"/>
<rect x="1508.7" y="728.7" width="93.00" height="14.60" fill="#2b2b2b"/>
<rect x="1511.64" y="731.20" width="9.61" height="9.61" fill="#181818"/>
<path d="M1521.26 732.20V740.80H1512.64" fill="none" stroke="#6a6a6a" stroke-width="2"/>
<rect x="1527.14" y="731.20" width="9.61" height="9.61" fill="#181818"/>
<path d="M1536.76 732.20V740.80H1528.14" fill="none" stroke="#6a6a6a" stroke-width="2"/>
<rect x="1542.64" y="731.20" width="9.61" height="9.61" fill="#181818"/>
<path d="M1552.26 732.20V740.80H1543.64" fill="none" stroke="#6a6a6a" stroke-width="2"/>
<rect x="1558.14" y="731.20" width="9.61" height="9.61" fill="#181818"/>
<path d="M1567.76 732.20V740.80H1559.14" fill="none" stroke="#6a6a6a" stroke-width="2"/>
<rect x="1573.64" y="731.20" width="9.61" height="9.61" fill="#181818"/>
<path d="M1583.26 732.20V740.80H1574.64" fill="none" stroke="#6a6a6a" stroke-width="2"/>
<rect x="1589.14" y="731.20" width="9.61" height="9.61" fill="#181818"/>
<path d="M1598.76 732.20V740.80H1590.14" fill="none" stroke="#6a6a6a" stroke-width="2"/>
<circle cx="1305" cy="448.3" r="9.6" fill="#333"/>
<circle cx="1607.5" cy="538.8" r="9.8" fill="#333"/>
<circle cx="1297.4" cy="735.4" r="9.6" fill="#333"/>
<circle cx="1607.6" cy="705.4" r="9.6" fill="#333"/>
<rect x="1298.70" y="460" width="11.6" height="28" fill="#585858"/>
<circle cx="1304.50" cy="466.7" r="3" fill="#bbb"/><circle cx="1304.50" cy="481.7" r="3" fill="#bbb"/>
<rect x="1313.75" y="460" width="11.6" height="28" fill="#585858"/>
<circle cx="1319.55" cy="466.7" r="3" fill="#bbb"/><circle cx="1319.55" cy="481.7" r="3" fill="#bbb"/>
<rect x="1328.80" y="460" width="11.6" height="28" fill="#585858"/>
<circle cx="1334.60" cy="466.7" r="3" fill="#bbb"/><circle cx="1334.60" cy="481.7" r="3" fill="#bbb"/>
<rect x="1589.5" y="554.20" width="28.3" height="11" fill="#585858"/>
<circle cx="1596.3" cy="559.70" r="3" fill="#bbb"/><circle cx="1611" cy="559.70" r="3" fill="#bbb"/>
<rect x="1589.5" y="568.90" width="28.3" height="11" fill="#585858"/>
<circle cx="1596.3" cy="574.40" r="3" fill="#bbb"/><circle cx="1611" cy="574.40" r="3" fill="#bbb"/>
<rect x="1589.5" y="583.60" width="28.3" height="11" fill="#585858"/>
<circle cx="1596.3" cy="589.10" r="3" fill="#bbb"/><circle cx="1611" cy="589.10" r="3" fill="#bbb"/>
<rect x="1226.7" y="443.9" width="10.5" height="5.2" fill="#eee"/>
<rect x="1226.7" y="456.4" width="10.5" height="5.2" fill="#eee"/>
<rect x="1226.7" y="468.9" width="10.5" height="5.2" fill="#eee"/>
<rect x="1273.6" y="443.9" width="10.5" height="5.2" fill="#eee"/>
<rect x="1273.6" y="468.9" width="10.5" height="5.2" fill="#eee"/>
<rect x="1237.2" y="441.7" width="36.6" height="35.8" fill="#9e9e9e"/>
<circle cx="1255.8" cy="460.5" r="9" fill="#9b0000"/>
<circle cx="1237.3" cy="489.8" r="6.5" fill="#bbb"/><circle cx="1237.3" cy="559.5" r="6.5" fill="#bbb"/>
<rect x="1193" y="492" width="86" height="70" fill="#1f4f75" opacity="0.6"/>
<rect x="1190.8" y="489.7" width="85.5" height="70" fill="#a0a0a0" stroke="#b5b5b5" stroke-width="1"/>
<rect x="1374.3" y="502.4" width="15.5" height="8.6" rx="1" fill="#cfcfcf"/><rect x="1377.3" y="502.4" width="9.5" height="8.6" fill="#f0f0f0"/>
<rect x="1374.3" y="529.4000000000001" width="15.5" height="8.6" rx="1" fill="#cfcfcf"/><rect x="1377.3" y="529.4000000000001" width="9.5" height="8.6" fill="#f0f0f0"/>
<rect x="1374.3" y="543.0" width="15.5" height="8.6" rx="1" fill="#cfcfcf"/><rect x="1377.3" y="543.0" width="9.5" height="8.6" fill="#f0f0f0"/>
<text x="1457" y="490.3" font-family="Liberation Mono" font-weight="bold" font-size="11.2" fill="#fff" textLength="111" lengthAdjust="spacingAndGlyphs">DIGITAL (PWM ~)</text>
<path d="M1382.5 495.8H1600.3" stroke="#c8dcea" stroke-width="1.4"/>
<path d="M1437 519.6C1431 510.5 1425.5 504.6 1418.2 504.6A15 15 0 0 0 1418.2 534.6C1425.5 534.6 1431 528.7 1437 519.6C1443 510.5 1448.5 504.6 1455.8 504.6A15 15 0 0 1 1455.8 534.6C1448.5 534.6 1443 528.7 1437 519.6z" fill="none" stroke="#fff" stroke-width="5.6" stroke-linejoin="round"/>
<path d="M1411.6 519.6h10" stroke="#fff" stroke-width="2.6"/><path d="M1450.3 519.6h11M1455.8 514.1v11" stroke="#fff" stroke-width="2.6"/>
<text x="1398.5" y="553.4" font-family="Liberation Mono" font-weight="bold" font-size="16" fill="#fff" textLength="70" lengthAdjust="spacingAndGlyphs">ARDUINO</text>
<rect x="1483" y="504.2" width="65.7" height="32.5" rx="5" fill="none" stroke="#6a9cc3" stroke-width="1"/>
<text x="1491.3" y="528.3" font-family="Liberation Sans" font-size="26.5" fill="#fff" textLength="50.4" lengthAdjust="spacingAndGlyphs">UNO</text>
<rect x="1553" y="528" width="20" height="12" rx="3" fill="#7dff7d" filter="url(#glow)" opacity="0.9"/>
<rect x="1555.5" y="530" width="14.5" height="8" rx="1.5" fill="#80f080"/>
<text x="1576" y="537.8" font-family="Liberation Sans" font-weight="bold" font-size="10" fill="#fff">ON</text>
<rect x="1380" y="625.9" width="222.9" height="55.1" rx="1.5" fill="#2d2d2d"/>
<rect x="1382" y="632.5" width="219" height="42" rx="2" fill="#3b3d40"/>
<rect x="1389.50" y="628.6" width="8.5" height="3.5" rx="1.7" fill="#eee"/><rect x="1389.50" y="675.5" width="8.5" height="3.5" rx="1.7" fill="#eee"/>
<rect x="1404.70" y="628.6" width="8.5" height="3.5" rx="1.7" fill="#eee"/><rect x="1404.70" y="675.5" width="8.5" height="3.5" rx="1.7" fill="#eee"/>
<rect x="1419.90" y="628.6" width="8.5" height="3.5" rx="1.7" fill="#eee"/><rect x="1419.90" y="675.5" width="8.5" height="3.5" rx="1.7" fill="#eee"/>
<rect x="1435.10" y="628.6" width="8.5" height="3.5" rx="1.7" fill="#eee"/><rect x="1435.10" y="675.5" width="8.5" height="3.5" rx="1.7" fill="#eee"/>
<rect x="1450.30" y="628.6" width="8.5" height="3.5" rx="1.7" fill="#eee"/><rect x="1450.30" y="675.5" width="8.5" height="3.5" rx="1.7" fill="#eee"/>
<rect x="1465.50" y="628.6" width="8.5" height="3.5" rx="1.7" fill="#eee"/><rect x="1465.50" y="675.5" width="8.5" height="3.5" rx="1.7" fill="#eee"/>
<rect x="1480.70" y="628.6" width="8.5" height="3.5" rx="1.7" fill="#eee"/><rect x="1480.70" y="675.5" width="8.5" height="3.5" rx="1.7" fill="#eee"/>
<rect x="1495.90" y="628.6" width="8.5" height="3.5" rx="1.7" fill="#eee"/><rect x="1495.90" y="675.5" width="8.5" height="3.5" rx="1.7" fill="#eee"/>
<rect x="1511.10" y="628.6" width="8.5" height="3.5" rx="1.7" fill="#eee"/><rect x="1511.10" y="675.5" width="8.5" height="3.5" rx="1.7" fill="#eee"/>
<rect x="1526.30" y="628.6" width="8.5" height="3.5" rx="1.7" fill="#eee"/><rect x="1526.30" y="675.5" width="8.5" height="3.5" rx="1.7" fill="#eee"/>
<rect x="1541.50" y="628.6" width="8.5" height="3.5" rx="1.7" fill="#eee"/><rect x="1541.50" y="675.5" width="8.5" height="3.5" rx="1.7" fill="#eee"/>
<rect x="1556.70" y="628.6" width="8.5" height="3.5" rx="1.7" fill="#eee"/><rect x="1556.70" y="675.5" width="8.5" height="3.5" rx="1.7" fill="#eee"/>
<rect x="1571.90" y="628.6" width="8.5" height="3.5" rx="1.7" fill="#eee"/><rect x="1571.90" y="675.5" width="8.5" height="3.5" rx="1.7" fill="#eee"/>
<rect x="1587.10" y="628.6" width="8.5" height="3.5" rx="1.7" fill="#eee"/><rect x="1587.10" y="675.5" width="8.5" height="3.5" rx="1.7" fill="#eee"/>
<circle cx="1411.9" cy="652.7" r="6" fill="#2a2a2a"/><circle cx="1571" cy="652.7" r="6" fill="#2a2a2a"/><path d="M1602 646.7a6 6 0 0 0 0 12z" fill="#2a2a2a"/>
<path d="M1416 688.6H1492.6M1508 688.6H1594.5" stroke="#b8d0e2" stroke-width="1.4"/>
<rect x="1215" y="688" width="67" height="52" rx="5" fill="#22507a"/>
<rect x="1212" y="680" width="69.8" height="50.5" rx="3.5" fill="#000"/>
<rect x="1199" y="677" width="16" height="55.5" rx="1.5" fill="#000"/>
<rect x="1274" y="682.5" width="9.5" height="45.5" rx="4" fill="#000"/><path d="M1276.6 681V729" stroke="#3a3a3a" stroke-width="0.9"/>
<g fill="none" stroke-width="3" stroke-linejoin="round">
<path d="M1249.5 237.4H1527.2Q1532.2 237.4 1532.2 242.4V448.5" stroke="#008a00"/>
<path d="M1249.5 252.2H1497.7Q1502.7 252.2 1502.7 257.2V448.5" stroke="#008a00"/>
<path d="M1249.5 282.1H1335.5Q1341 282.1 1341 287.6V397.2Q1341 402.7 1335.5 402.7H1166Q1160.4 402.7 1160.4 408.2V818" stroke="#ee0000"/>
<path d="M1249.5 296.6H1366.7Q1372.2 296.6 1372.2 302.1V448.5" stroke="#000"/>
</g>
<path d="M1442.3 734V818" stroke="#ee0000" stroke-width="3" fill="none"/>
</svg>
<div class="a" style="left:938px;top:818px;width:1px;height:209px;background:#fff"></div>
<div class="a" style="left:943.5px;top:818.00px;height:18px;line-height:18px;font-size:14.6px;color:#111">3</div>
<div class="a" style="left:943.5px;top:843.08px;height:18px;line-height:18px;font-size:14.6px;color:#111">4</div>
<div class="a" style="left:943.5px;top:868.16px;height:18px;line-height:18px;font-size:14.6px;color:#111">5</div>
<div class="a" style="left:943.5px;top:893.24px;height:18px;line-height:18px;font-size:14.6px;color:#111">6</div>
<div class="a" style="left:943.5px;top:918.32px;height:18px;line-height:18px;font-size:14.6px;color:#111">7</div>
<div class="a" style="left:943.5px;top:943.40px;height:18px;line-height:18px;font-size:14.6px;color:#111">8</div>
<div class="a" style="left:943.5px;top:968.48px;height:18px;line-height:18px;font-size:14.6px;color:#111">9</div>
<div class="a" style="left:1857px;top:818px;width:16px;height:176px;background:#fafafa"></div>
<svg class="a" style="left:1857px;top:818px" width="16" height="176" viewBox="0 0 16 176"><path d="M3.5 16.5h8.8l-4.4-5.5z" fill="#a0a0a0"/><path d="M3.5 160h8.8l-4.4 5.5z" fill="#a0a0a0"/><rect x="4.5" y="73" width="7.5" height="78" rx="3.7" fill="#909090"/></svg>
<div class="a" style="left:939px;top:994px;width:934px;height:1px;background:#7a7a7a"></div>
<div class="a" style="left:1748px;top:995px;width:40.6px;height:32px;background:#f0f0f0;border-left:1px solid #9a9a9a;border-radius:0 0 2px 2px"></div>
<div class="a" style="left:1789.6px;top:995px;width:41.0px;height:32px;background:#f0f0f0;border-left:1px solid #9a9a9a;border-radius:0 0 2px 2px"></div>
<div class="a" style="left:1831.6px;top:995px;width:40.6px;height:32px;background:#f0f0f0;border-left:1px solid #9a9a9a;border-radius:0 0 2px 2px"></div>
<svg class="a" style="left:1748px;top:995px" width="125" height="32" viewBox="1748 995 125 32"><path d="M1759.2 999.8V1018.2H1779.2" fill="none" stroke="#000" stroke-width="1.7"/><path d="M1759.5 1016.5L1765.6 1005.6L1770 1010L1778.9 1001" fill="none" stroke="#000" stroke-width="1.6"/><rect x="1803.8" y="1002.2" width="5.4" height="14.5" fill="#000"/><rect x="1812.1" y="1002.2" width="5.4" height="14.5" fill="#000"/><path d="M1844.5 1002.2h16.8" stroke="#000" stroke-width="2"/><rect x="1849.5" y="999.6" width="6.8" height="2.8" fill="none" stroke="#000" stroke-width="1.3"/><path d="M1845.8 1003.5h14.2l-1.2 13.2q-.2 1.5-1.8 1.5h-8.2q-1.6 0-1.8-1.5z" fill="#000"/><rect x="1850" y="1006" width="1.7" height="9" fill="#f0f0f0"/><rect x="1854.3" y="1006" width="1.7" height="9" fill="#f0f0f0"/></svg><!-- taskbar icons -->
<svg class="a" style="left:780px;top:1032px" width="360" height="48" viewBox="780 1032 360 48">
<defs>
<linearGradient id="win" x1="0" y1="0" x2="1" y2="1"><stop offset="0" stop-color="#5fd4ff"/><stop offset="1" stop-color="#1d9bf0"/></linearGradient>
<linearGradient id="cop" x1="0" y1="0" x2="1" y2="1"><stop offset="0" stop-color="#38c6ff"/><stop offset="0.45" stop-color="#6bd06a"/><stop offset="0.7" stop-color="#f7b22c"/><stop offset="1" stop-color="#d65ad8"/></linearGradient>
<linearGradient id="edge2" x1="0.1" y1="0" x2="0.9" y2="0.8"><stop offset="0" stop-color="#1a8fe0"/><stop offset="0.5" stop-color="#2ab9c8"/><stop offset="1" stop-color="#5bdc5a"/></linearGradient><linearGradient id="edge" x1="0" y1="0" x2="1" y2="1"><stop offset="0" stop-color="#3fd37a"/><stop offset="0.45" stop-color="#1aa3e8"/><stop offset="1" stop-color="#0c5fb8"/></linearGradient>
<linearGradient id="ma" x1="0" y1="1" x2="1" y2="0"><stop offset="0" stop-color="#6b2cf5"/><stop offset="1" stop-color="#1b9af5"/></linearGradient>
</defs>
<g fill="url(#win)"><rect x="794.4" y="1045" width="11.3" height="11.3" rx="1"/><rect x="807" y="1045" width="11.3" height="11.3" rx="1"/><rect x="794.4" y="1056.8" width="11.3" height="11.3" rx="1"/><rect x="807" y="1056.8" width="11.3" height="11.3" rx="1"/></g>
<path d="M843.5 1046.5q1-1.5 3-1.5h7.5q2.2 0 3 2l-5.5 14.5q-.8 2-3 2h-6q-2.5 0-1.8-2.5z" fill="url(#cop)"/>
<path d="M851.5 1051h8.5q2.5 0 2 2.5l-3 9q-.8 2-3 2h-7z" fill="#c060e0"/><path d="M851.5 1051h8.5q2.5 0 2 2.5l-1.5 4.5h-10z" fill="#b565f0" opacity="0.8"/><path d="M846 1060h8l-1.6 4.5h-7.5z" fill="#e860a0"/>
<rect x="845" y="1061.5" width="18" height="6.8" rx="2" fill="#f5c518"/>
<text x="854" y="1067.2" font-family="Liberation Sans" font-weight="bold" font-size="6.3" fill="#111" text-anchor="middle" letter-spacing="0.3">PRE</text>
<path d="M883 1046.5q0-1.5 1.5-1.5h7l2 2.5h12q1.5 0 1.5 1.5v16q0 1.5-1.5 1.5h-21q-1.5 0-1.5-1.5z" fill="#f3c64b"/>
<path d="M883 1050h24v15q0 1.5-1.5 1.5h-21q-1.5 0-1.5-1.5z" fill="#fbd86a"/>
<rect x="887" y="1058" width="16" height="7" rx="1.5" fill="#1e88d8"/>
<rect x="891.5" y="1072.6" width="7" height="2.6" rx="1.3" fill="#9a9a9a"/>
<rect x="919.4" y="1036" width="38.9" height="39.8" rx="4" fill="#ffffff" fill-opacity="0.07" stroke="#ffffff" stroke-opacity="0.05"/>
<circle cx="939" cy="1056" r="12.1" fill="url(#edge2)"/>
<path d="M927 1055.5q.5-6 5.5-9q-3 5.5.5 10.5q3.5 5.5 10.5 5.5q4.5 0 7-1.8q-3 7.5-11.5 7.8q-12 0-12-13z" fill="#1463c4"/>
<path d="M932 1052.5q2.5-4 7-4q5 0 6.5 4.5q-2 3-6.5 3.5q-2 .3-3 2q-3-2-4-6z" fill="#2fa4e8" opacity="0.7"/>
<circle cx="940" cy="1057.5" r="2.8" fill="#4a2a2e"/>
<rect x="931" y="1072.5" width="17" height="3" rx="1.5" fill="#4cc2ff"/>
<path d="M982.6 1043.5l10.2 5.8v11.8l-10.2 5.8-10.2-5.8v-11.8z" fill="#555a60" stroke="#888" stroke-width="0.8"/>
<path d="M982.6 1048l6 10.5h-12z" fill="#2a2d31"/><path d="M982.6 1048l6 10.5-6-3z" fill="#d0d0d0"/>
<rect x="1014.6" y="1044" width="24.6" height="24.6" fill="url(#ma)"/>
<path d="M1018 1064l6-14h3l-6 14zM1024.5 1064l6-14h3l-6 14z" fill="#fff"/><path d="M1031 1064l3-7h2l-1 7z" fill="#fff" opacity="0.8"/>
<rect x="1059.4" y="1044.5" width="22.9" height="16.5" rx="2" fill="#76c043"/>
<rect x="1069.5" y="1061" width="3" height="4" fill="#76c043"/><rect x="1065" y="1064.5" width="12" height="2.5" rx="1" fill="#76c043"/>
<path d="M1064 1057q-3 0-3-2.8t3-3q1-4 5-4t5 3.5q4-.5 4.5 3t-3.5 3.3z" fill="#fff"/>
<rect x="1067.5" y="1072.6" width="7" height="2.6" rx="1.3" fill="#9a9a9a"/>
<rect x="1108" y="1044.5" width="19" height="23" rx="1.5" fill="#2a6ad0"/>
<rect x="1108" y="1044.5" width="19" height="6" fill="#41a5ee"/><rect x="1108" y="1050.5" width="19" height="6" fill="#2b7cd3"/><rect x="1108" y="1056.5" width="19" height="6" fill="#185abd"/><rect x="1108" y="1062.5" width="19" height="5" fill="#103f91"/>
<rect x="1102.7" y="1049" width="13" height="13" rx="1.5" fill="#1a5cc4"/>
<text x="1109.2" y="1059.6" font-family="Liberation Sans" font-weight="bold" font-size="10.5" fill="#fff" text-anchor="middle">W</text>
<rect x="1111.5" y="1072.6" width="7" height="2.6" rx="1.3" fill="#9a9a9a"/>
</svg>
<!-- tray -->
<svg class="a" style="left:1660px;top:1040px" width="250" height="36" viewBox="1660 1040 250 36">
<path d="M1665.8 1059.5l4.9-4.9 4.9 4.9" fill="none" stroke="#fff" stroke-width="1.3"/>
<g fill="none" stroke="#fff" stroke-width="1.2"><path d="M1739.5 1053.5q7.2-6.5 14.4 0"/><path d="M1741.8 1056.2q4.9-4.3 9.8 0"/><path d="M1744.2 1058.8q2.5-2.2 5 0"/></g><circle cx="1746.7" cy="1061" r="1.2" fill="#fff"/>
<path d="M1764 1053.5h2.8l3.8-3.3v11.6l-3.8-3.3H1764z" fill="none" stroke="#fff" stroke-width="1.1"/><path d="M1772.5 1053.5q1.8 2.5 0 5" fill="none" stroke="#fff" stroke-width="1.1"/><path d="M1774.6 1051.8q3 4.2 0 8.4" fill="none" stroke="#999" stroke-width="1.1"/>
<rect x="1787.5" y="1052.2" width="13.5" height="8.5" rx="1.3" fill="none" stroke="#fff" stroke-width="1.1"/><rect x="1801.3" y="1054.8" width="1.6" height="3.3" fill="#fff"/><rect x="1789" y="1053.8" width="8" height="5.3" fill="#fff"/><path d="M1790 1048.5l-2 4h3l-1.5 3.5" fill="none" stroke="#fff" stroke-width="1"/>
<path d="M1886.5 1061.5h12M1888 1061.5v-5.5q0-4.5 4.5-4.5t4.5 4.5v5.5M1890.6 1063.8q1.9 1.6 3.8 0" fill="none" stroke="#fff" stroke-width="1.1"/><path d="M1892.5 1050v1.5" stroke="#fff" stroke-width="1.1"/>
</svg>
<div class="a" style="left:1692px;top:1041px;width:35px;text-align:center;line-height:16px;font-size:11.6px;color:#fff">ENG<br>US</div>
<div class="a" style="left:1800px;top:1041px;width:77px;text-align:right;line-height:16px;font-size:11.5px;color:#fff">12:58<br>20.02.2024</div>

<!-- edge sidebar -->
<svg class="a" style="left:1873px;top:75px" width="47" height="957" viewBox="1873 75 47 957">
<defs>
<linearGradient id="srch" x1="0" y1="0" x2="1" y2="1"><stop offset="0" stop-color="#3a7fb0"/><stop offset="1" stop-color="#15406a"/></linearGradient>
<linearGradient id="tag" x1="0" y1="0" x2="1" y2="1"><stop offset="0" stop-color="#7fb2ff"/><stop offset="1" stop-color="#3a6fe0"/></linearGradient>
<linearGradient id="cpl" x1="0" y1="0" x2="1" y2="1"><stop offset="0" stop-color="#3aa0ff"/><stop offset="0.5" stop-color="#7a5cf0"/><stop offset="1" stop-color="#d070e0"/></linearGradient>
</defs>
<circle cx="1893.5" cy="94.5" r="5.6" fill="url(#srch)" stroke="#b8b8b8" stroke-width="1.6"/>
<path d="M1898 98.5l4 4" stroke="#b44bd6" stroke-width="2.6" stroke-linecap="round"/>
<path d="M1889 138.5l8.5-8.5h6.5v6.5l-8.5 8.5q-1 1-2 0l-4.5-4.5q-1-1 0-2z" fill="url(#tag)"/><circle cx="1900.5" cy="133.5" r="1.5" fill="#ffd43b"/>
<rect x="1887.5" y="177.5" width="17.5" height="10" rx="1.5" fill="#e0552b"/><rect x="1887.5" y="177.5" width="17.5" height="4" fill="#f06b3b"/><path d="M1892.5 177.5v-2.5h7.5v2.5" fill="none" stroke="#ccc" stroke-width="1.2"/><rect x="1895" y="180.5" width="2.5" height="2.5" fill="#ddd"/>
<circle cx="1893.2" cy="220.5" r="3" fill="#b0b0b0"/><path d="M1890.5 223.5h5.4l-.8 2.5q1 2.5 1.8 5h2.2v2H1887.5v-2h2.2q.8-2.5 1.8-5z" fill="#a8a8a8"/>
<path d="M1897.6 214v-.4h1.8v1.7h1.5v-1.7h1.6v1.7h1.5v-1.7h1.8v2.8q-1 1-1 2.6v5.2h1v2.7h-8.4v-2.7h1v-5.2q0-1.6-1-2.6z" fill="#b63ef0"/>
<path d="M1896.5 255.8l7.6 4.4q1 .6 1 1.7v6.8q0 1.1-1 1.7l-7.6 4.4q-1 .6-2 0l-5.6-3.3q-1-.6-1-1.7v-7.6q0-1.1 1-1.7l5.6-3.5q1-.6 2 0z" fill="url(#cpl)"/>
<path d="M1896.5 260.5l4 2.3v5l-4 2.3-4-2.3v-5z" fill="#3b3b3b"/><path d="M1888.8 262l7.7 4.6 8.2-4.6" fill="none" stroke="#3b3b3b" stroke-width="0.6" opacity="0.6"/>
<rect x="1893.5" y="299.2" width="11.5" height="16.8" rx="1.5" fill="#1c8ae0"/><path d="M1893.5 308l11.5 8h-11.5z" fill="#0f6cc4"/><rect x="1888" y="302" width="11" height="11" rx="1.3" fill="#0f5fb3"/><circle cx="1893.5" cy="307.5" r="2.8" fill="none" stroke="#fff" stroke-width="1.5"/>
<path d="M1886.8 348.5l18.2-5.8-7.2 13-3.3-4.2z" fill="#2a9bf0"/><path d="M1894.5 351.5l-2.3 4.5 12.8-13.3z" fill="#f7b500"/><path d="M1894.5 351.5l3.3 4.2 7.2-13z" fill="#1a7fd0"/>
<path d="M1881.5 384.3H1910.5" stroke="#5a5a5a" stroke-width="1"/>
<path d="M1896 408.5v15M1888.5 416h15" stroke="#ddd" stroke-width="1.3"/>
<path d="M1882 984.3H1911" stroke="#5a5a5a" stroke-width="1"/>
<g transform="translate(1896.2 1007.8) scale(0.82)"><path d="M-1.6-8.2h3.2l.6 2.4 2 .9 2.2-1.3 2.3 2.3-1.3 2.2.9 2 2.4.6v3.2l-2.4.6-.9 2 1.3 2.2-2.3 2.3-2.2-1.3-2 .9-.6 2.4h-3.2l-.6-2.4-2-.9-2.2 1.3-2.3-2.3 1.3-2.2-.9-2-2.4-.6v-3.2l2.4-.6.9-2-1.3-2.2 2.3-2.3 2.2 1.3 2-.9z" fill="none" stroke="#ddd" stroke-width="1.1" stroke-linejoin="round"/><circle r="2.6" fill="none" stroke="#ddd" stroke-width="1.1"/></g>
</svg>

</body></html>
